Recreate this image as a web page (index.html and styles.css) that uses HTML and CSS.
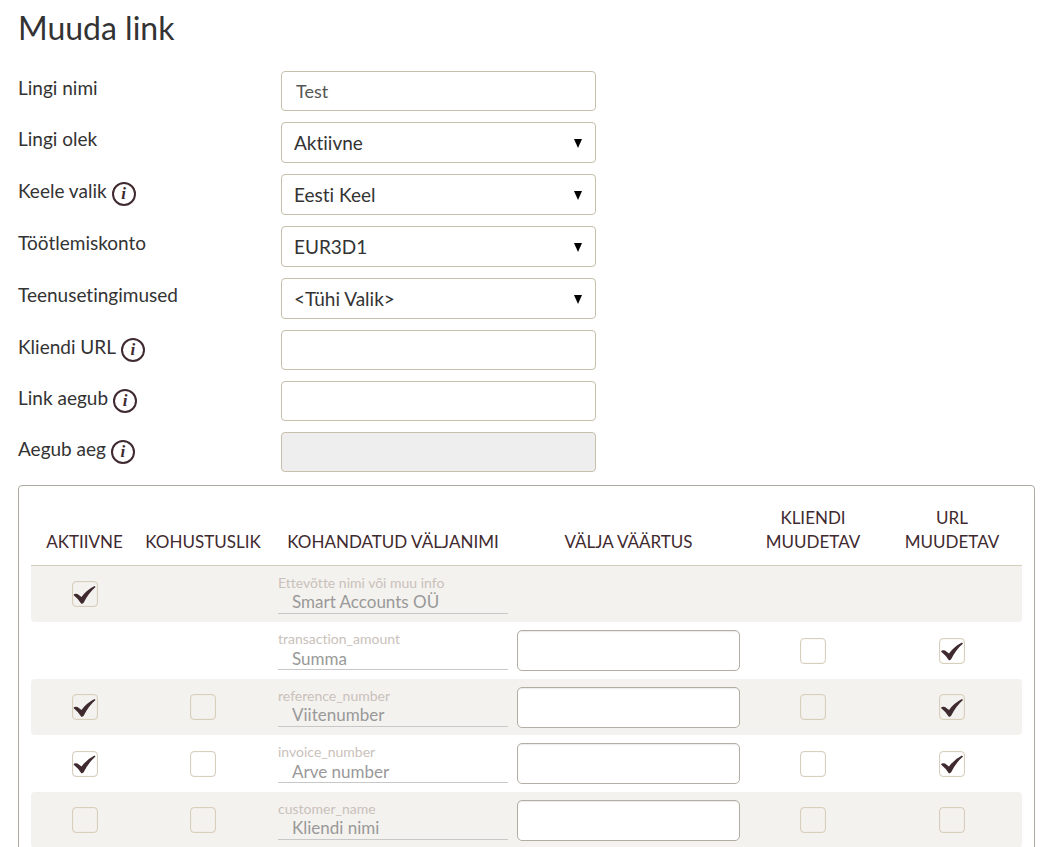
FILE: index.html
```html
<!DOCTYPE html>
<html lang="et">
<head>
<meta charset="utf-8">
<title>Muuda link</title>
<link rel="stylesheet" href="styles.css">
</head>
<body>
<main class="page">
  <h1 class="title">Muuda link</h1>
  <form class="form">
    <div class="row">
      <div class="caption"><label for="name">Lingi nimi</label></div>
      <input class="control" id="name" type="text" value="Test">
    </div>
    <div class="row">
      <div class="caption"><label for="status">Lingi olek</label></div>
      <div class="select"><select class="control control-select" id="status"><option>Aktiivne</option></select></div>
    </div>
    <div class="row">
      <div class="caption"><label for="lang">Keele valik</label><button class="info" type="button">i</button></div>
      <div class="select"><select class="control control-select" id="lang"><option>Eesti Keel</option></select></div>
    </div>
    <div class="row">
      <div class="caption"><label for="account">Töötlemiskonto</label></div>
      <div class="select"><select class="control control-select" id="account"><option>EUR3D1</option></select></div>
    </div>
    <div class="row">
      <div class="caption"><label for="terms">Teenusetingimused</label></div>
      <div class="select"><select class="control control-select" id="terms"><option>&lt;Tühi Valik&gt;</option></select></div>
    </div>
    <div class="row">
      <div class="caption"><label for="url">Kliendi URL</label><button class="info" type="button">i</button></div>
      <input class="control" id="url" type="text">
    </div>
    <div class="row">
      <div class="caption"><label for="expires">Link aegub</label><button class="info" type="button">i</button></div>
      <input class="control" id="expires" type="text">
    </div>
    <div class="row">
      <div class="caption"><label for="time">Aegub aeg</label><button class="info" type="button">i</button></div>
      <input class="control" id="time" type="text" disabled>
    </div>

    <section class="panel">
      <table class="fields">
        <colgroup>
          <col class="col-active"><col class="col-required"><col class="col-name">
          <col class="col-value"><col class="col-client"><col class="col-url">
        </colgroup>
        <thead>
          <tr>
            <th id="h-active">AKTIIVNE</th>
            <th id="h-required">KOHUSTUSLIK</th>
            <th id="h-name" class="name">KOHANDATUD VÄLJANIMI</th>
            <th id="h-value" class="value">VÄLJA VÄÄRTUS</th>
            <th id="h-client">KLIENDI<br>MUUDETAV</th>
            <th id="h-url">URL<br>MUUDETAV</th>
          </tr>
        </thead>
        <tbody>
          <tr>
            <td><input class="check" type="checkbox" aria-labelledby="h-active" checked></td>
            <td></td>
            <td class="name"><label class="key" for="f1">Ettevõtte nimi või muu info</label><input class="label-input" id="f1" type="text" value="Smart Accounts OÜ"></td>
            <td></td>
            <td></td>
            <td></td>
          </tr>
          <tr>
            <td></td>
            <td></td>
            <td class="name"><label class="key" for="f2">transaction_amount</label><input class="label-input" id="f2" type="text" value="Summa"></td>
            <td class="value"><input class="value-input" type="text" aria-labelledby="h-value"></td>
            <td><input class="check" type="checkbox" aria-labelledby="h-client"></td>
            <td><input class="check" type="checkbox" aria-labelledby="h-url" checked></td>
          </tr>
          <tr>
            <td><input class="check" type="checkbox" aria-labelledby="h-active" checked></td>
            <td><input class="check" type="checkbox" aria-labelledby="h-required"></td>
            <td class="name"><label class="key" for="f3">reference_number</label><input class="label-input" id="f3" type="text" value="Viitenumber"></td>
            <td class="value"><input class="value-input" type="text" aria-labelledby="h-value"></td>
            <td><input class="check" type="checkbox" aria-labelledby="h-client"></td>
            <td><input class="check" type="checkbox" aria-labelledby="h-url" checked></td>
          </tr>
          <tr>
            <td><input class="check" type="checkbox" aria-labelledby="h-active" checked></td>
            <td><input class="check" type="checkbox" aria-labelledby="h-required"></td>
            <td class="name"><label class="key" for="f4">invoice_number</label><input class="label-input" id="f4" type="text" value="Arve number"></td>
            <td class="value"><input class="value-input" type="text" aria-labelledby="h-value"></td>
            <td><input class="check" type="checkbox" aria-labelledby="h-client"></td>
            <td><input class="check" type="checkbox" aria-labelledby="h-url" checked></td>
          </tr>
          <tr>
            <td><input class="check" type="checkbox" aria-labelledby="h-active"></td>
            <td><input class="check" type="checkbox" aria-labelledby="h-required"></td>
            <td class="name"><label class="key" for="f5">customer_name</label><input class="label-input" id="f5" type="text" value="Kliendi nimi"></td>
            <td class="value"><input class="value-input" type="text" aria-labelledby="h-value"></td>
            <td><input class="check" type="checkbox" aria-labelledby="h-client"></td>
            <td><input class="check" type="checkbox" aria-labelledby="h-url"></td>
          </tr>
        </tbody>
      </table>
    </section>
  </form>
</main>
</body>
</html>
```
FILE: styles.css
```css
* {
  box-sizing: border-box;
  font-variant-ligatures: none;
}

body {
  margin: 0;
  background: #fff;
  color: #333;
  font-family: Lato, "Liberation Sans", sans-serif;
  font-size: 19px;
  line-height: 24px;
}

.page {
  padding: 8px 16px 16px 18px;
}

.title {
  margin: 0 0 23px;
  font-size: 32px;
  line-height: 40px;
  font-weight: 400;
}

.form {
  display: flex;
  flex-direction: column;
  gap: 11px;
}

.row {
  display: grid;
  grid-template-columns: 263px minmax(0, 315px);
  align-items: start;
}

.caption {
  display: flex;
  align-items: flex-start;
  gap: 5px;
  padding-top: 5px;
}

.info {
  width: 24px;
  height: 24px;
  margin-top: 3px;
  padding: 0;
  border: 2px solid #3f2a2f;
  border-radius: 50%;
  background: none;
  color: #3f2a2f;
  font: italic bold 17px/20px "Liberation Serif", serif;
}

.control {
  display: block;
  width: 100%;
  height: 40px;
  padding: 0 14px;
  border: 1px solid #c8bfab;
  border-radius: 4px;
  background: #fff;
  color: #555;
  font: 18px/24px Lato, sans-serif;
  font-variant-ligatures: none;
}

.control:disabled {
  background: #eee;
}

.control-select {
  height: 41px;
  padding: 0 12px;
  appearance: none;
  color: #333;
  font-size: 19px;
}

.select {
  position: relative;
}

.select::after {
  content: "";
  position: absolute;
  top: 17px;
  right: 14px;
  width: 8px;
  height: 9px;
  background: #000;
  clip-path: polygon(0 0, 100% 0, 50% 100%);
  pointer-events: none;
}

.panel {
  margin-top: 2px;
  padding: 12px;
  border: 1px solid #b0a99f;
  border-radius: 4px;
}

.fields {
  width: 100%;
  table-layout: fixed;
  border-collapse: separate;
  border-spacing: 0;
}

.col-active { width: 107px; }
.col-required { width: 130px; }
.col-name { width: 244px; }
.col-value { width: 232px; }
.col-client { width: 138px; }
.col-url { width: 140px; }

.fields th {
  padding: 8px 0 11px;
  border-bottom: 1px solid #d3cdbb;
  color: #3f2a2f;
  font-size: 17px;
  line-height: 24px;
  font-weight: 400;
  text-align: center;
  vertical-align: bottom;
}

.fields td {
  height: 57px;
  padding: 0;
  text-align: center;
  vertical-align: middle;
}

.fields tr:nth-child(odd) td {
  height: 56px;
  background: #f4f2ee;
}

.fields td:first-child {
  border-bottom-left-radius: 4px;
}

.fields td:last-child {
  border-bottom-right-radius: 4px;
}

.fields tr:nth-child(n + 2) td:first-child {
  border-top-left-radius: 4px;
}

.fields tr:nth-child(n + 2) td:last-child {
  border-top-right-radius: 4px;
}

.fields .name {
  padding-left: 10px;
  padding-right: 4px;
}

.fields td.name {
  text-align: left;
}

.fields .value {
  padding-left: 5px;
  padding-right: 4px;
}

.key {
  display: block;
  color: #c9c1bb;
  font-size: 14px;
  line-height: 16px;
}

.label-input {
  display: block;
  width: 100%;
  height: 23px;
  padding: 0 14px;
  border: 0;
  border-bottom: 1px solid #c8c8c8;
  background: none;
  color: #999;
  font: 17px/22px Lato, sans-serif;
}

.value-input {
  display: block;
  width: 100%;
  height: 41px;
  padding: 0 12px;
  border: 1px solid #b3aea4;
  border-radius: 5px;
  background: #fff;
  box-shadow: inset 0 1px 1px rgba(0, 0, 0, 0.08);
  font: 18px/24px Lato, sans-serif;
}

.check {
  display: block;
  width: 26px;
  height: 26px;
  margin: 0 auto;
  appearance: none;
  border: 1px solid #d8cebc;
  border-radius: 4px;
  box-shadow: inset 0 0 1px #d8cebc;
}

.check:checked::before {
  content: "";
  display: block;
  width: 24px;
  height: 24px;
  background: #3f2a2f;
  clip-path: path("M1 13 Q2 11 5 12 L9 15 Q14 8 22 4 L23 5 Q16 11 11 21 L9 22 Q6 17 1 13 Z");
}
```
